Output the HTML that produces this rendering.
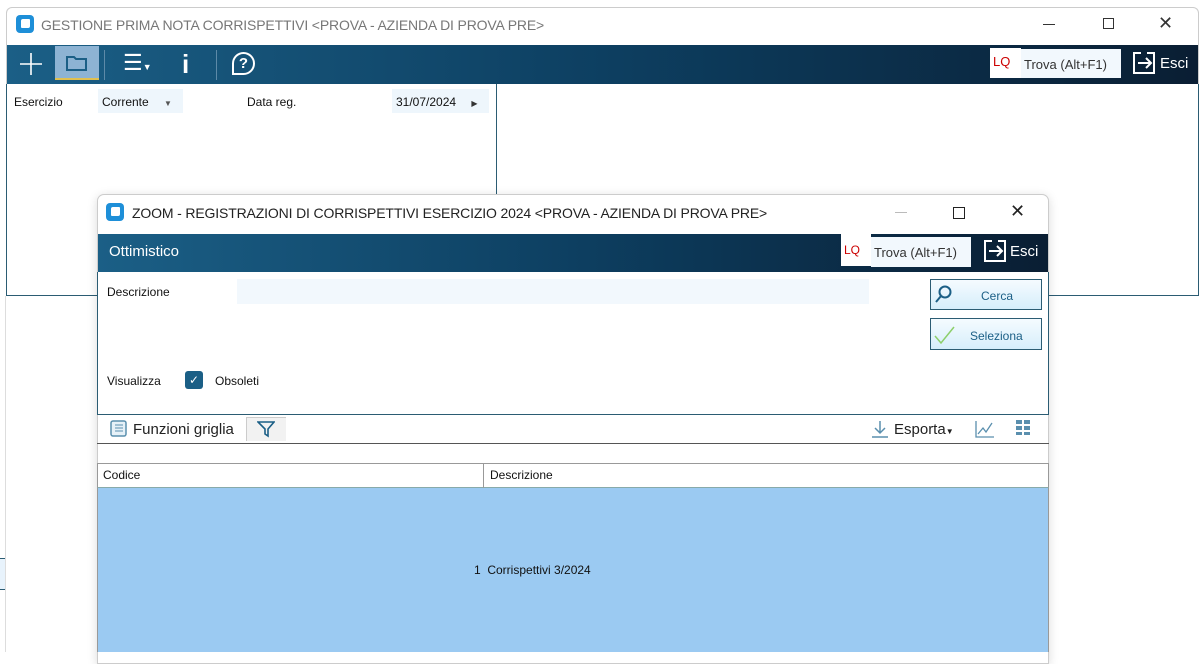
<!DOCTYPE html><html><head><style>
*{box-sizing:border-box;margin:0;padding:0}
body{width:1203px;height:652px;background:#fff;position:relative;overflow:hidden;font-family:"Liberation Sans",sans-serif;font-size:12px;color:#111}
.a{position:absolute}
.grad{background:linear-gradient(90deg,#1b5f86 0%,#0d3f61 50%,#0a1e33 100%)}
</style></head><body>
<div class="a" style="left:6px;top:7px;width:1193px;height:289px;border:1px solid #ccc;border-bottom:none;border-radius:6px 6px 0 0"></div>
<div class="a" style="left:16px;top:15px;width:18px;height:18px;background:#1e8fd8;border-radius:4px"><div class="a" style="left:5px;top:4px;width:9px;height:9px;background:#fff;border-radius:2px 1px 2px 1px"></div></div>
<div class="a" style="left:41px;top:17px;font-size:14px;color:#777;letter-spacing:-0.15px">GESTIONE PRIMA NOTA CORRISPETTIVI &lt;PROVA - AZIENDA DI PROVA PRE&gt;</div>
<div class="a" style="left:1043px;top:24px;width:12px;border-top:1px solid #333"></div>
<div class="a" style="left:1103px;top:18px;width:11px;height:11px;border:1px solid #333"></div>
<div class="a" style="left:1158px;top:13px;font-size:18px;color:#333">✕</div>
<div class="a grad" style="left:7px;top:45px;width:1191px;height:39px"></div>
<svg class="a" style="left:19px;top:52px" width="24" height="24"><path d="M12 1v22M1 12h22" stroke="#fff" stroke-width="1.6"/></svg>
<div class="a" style="left:55px;top:46px;width:44px;height:34px;background:#8db3d3;border-bottom:2px solid #e0c050"></div>
<svg class="a" style="left:65px;top:54px" width="24" height="18"><path d="M2 3h7l2 2h10v11H2z" fill="none" stroke="#1b5f86" stroke-width="2"/></svg>
<div class="a" style="left:104px;top:50px;width:1px;height:30px;background:#5d8aa8"></div>
<div class="a" style="left:123px;top:50px;color:#fff;font-size:22px">☰<span style="font-size:9px">▼</span></div>
<div class="a" style="left:182px;top:49px;color:#fff;font-size:26px;font-weight:bold">i</div>
<div class="a" style="left:216px;top:50px;width:1px;height:30px;background:#5d8aa8"></div>
<div class="a" style="left:232px;top:52px;width:23px;height:23px;border:2px solid #fff;border-radius:50% 50% 50% 0;color:#fff;font-size:15px;text-align:center;line-height:19px;font-weight:bold">?</div>
<div class="a" style="left:990px;top:48px;width:31px;height:30px;background:#fff;color:#c00;font-size:13px;padding:6px 3px">LQ</div>
<div class="a" style="left:1021px;top:49px;width:100px;height:29px;background:#f2f8fd;font-size:13px;padding:8px 3px;color:#333">Trova (Alt+F1)</div>
<svg class="a" style="left:1132px;top:51px" width="24" height="24"><path d="M9 2H2v20h20V2h-7M6 12h13M14 7l5 5-5 5" fill="none" stroke="#fff" stroke-width="2"/></svg>
<div class="a" style="left:1160px;top:55px;color:#fff;font-size:15px">Esci</div>
<div class="a" style="left:6px;top:84px;width:1193px;height:212px;border:1px solid #2b5c73;border-top:none"></div>
<div class="a" style="left:496px;top:84px;width:1px;height:212px;background:#2b5c73"></div>
<div class="a" style="left:14px;top:95px">Esercizio</div>
<div class="a" style="left:98px;top:89px;width:85px;height:24px;background:#eef6fc;padding:6px 4px">Corrente <span style="font-size:8px;margin-left:12px;color:#555">▼</span></div>
<div class="a" style="left:247px;top:95px">Data reg.</div>
<div class="a" style="left:392px;top:89px;width:97px;height:24px;background:#eef6fc;padding:6px 4px">31/07/2024 <span style="font-size:8px;margin-left:12px;color:#333">▶</span></div>
<div class="a" style="left:0;top:558px;width:6px;height:32px;background:#e8f3fc;border-top:1px solid #2b5c73;border-bottom:1px solid #2b5c73"></div>
<div class="a" style="left:5px;top:296px;width:1px;height:356px;background:#ddd"></div>
<!-- dialog -->
<div class="a" style="left:97px;top:194px;width:952px;height:470px;background:#fff;border:1px solid #ccc;border-radius:7px 7px 0 0;box-shadow:0 2px 10px rgba(0,0,0,.15)"></div>
<div class="a" style="left:106px;top:203px;width:18px;height:18px;background:#1e8fd8;border-radius:4px"><div class="a" style="left:5px;top:4px;width:9px;height:9px;background:#fff;border-radius:2px 1px 2px 1px"></div></div>
<div class="a" style="left:132px;top:205px;font-size:14px;color:#222;letter-spacing:-0.15px">ZOOM - REGISTRAZIONI DI CORRISPETTIVI ESERCIZIO 2024 &lt;PROVA - AZIENDA DI PROVA PRE&gt;</div>
<div class="a" style="left:895px;top:212px;width:12px;border-top:1px solid #bbb"></div>
<div class="a" style="left:953px;top:207px;width:12px;height:12px;border:1.5px solid #222"></div>
<div class="a" style="left:1010px;top:201px;font-size:18px;color:#222">✕</div>
<div class="a grad" style="left:98px;top:234px;width:950px;height:38px"></div>
<div class="a" style="left:109px;top:243px;color:#fff;font-size:15px">Ottimistico</div>
<div class="a" style="left:841px;top:234px;width:30px;height:32px;background:#fff;color:#c00;font-size:12px;padding:9px 3px">LQ</div>
<div class="a" style="left:871px;top:237px;width:100px;height:30px;background:#f2f8fd;font-size:13px;padding:8px 3px;color:#333">Trova (Alt+F1)</div>
<svg class="a" style="left:983px;top:239px" width="24" height="24"><path d="M9 2H2v20h20V2h-7M6 12h13M14 7l5 5-5 5" fill="none" stroke="#fff" stroke-width="2"/></svg>
<div class="a" style="left:1010px;top:243px;color:#fff;font-size:15px">Esci</div>
<div class="a" style="left:97px;top:272px;width:952px;height:143px;border:1px solid #2b5c73;border-top:none"></div>
<div class="a" style="left:107px;top:285px">Descrizione</div>
<div class="a" style="left:237px;top:279px;width:632px;height:25px;background:#f2f8fd"></div>
<div class="a" style="left:930px;top:279px;width:112px;height:31px;border:1px solid #2b5c73;background:linear-gradient(#f5fbff,#d6eefb);color:#1b5f86;font-size:12px;padding:9px 0 0 50px">Cerca</div>
<svg class="a" style="left:934px;top:284px" width="20" height="20"><circle cx="11" cy="8" r="5.5" fill="none" stroke="#1b5f86" stroke-width="2"/><path d="M7 12l-5 6" stroke="#1b5f86" stroke-width="2"/></svg>
<div class="a" style="left:930px;top:318px;width:112px;height:32px;border:1px solid #2b5c73;background:linear-gradient(#f5fbff,#d6eefb);color:#1b5f86;font-size:12px;padding:10px 0 0 39px">Seleziona</div>
<svg class="a" style="left:933px;top:324px" width="24" height="22"><path d="M2 12l6 7L21 3" fill="none" stroke="#8ccf6a" stroke-width="1.5"/></svg>
<div class="a" style="left:107px;top:374px">Visualizza</div>
<div class="a" style="left:185px;top:371px;width:18px;height:18px;background:#1b5f86;border-radius:3px;color:#fff;font-size:12px;text-align:center;line-height:18px">✓</div>
<div class="a" style="left:215px;top:374px">Obsoleti</div>
<svg class="a" style="left:110px;top:420px" width="18" height="18"><rect x="1" y="1" width="15" height="15" rx="2" fill="#e6f1f8" stroke="#5a8fae" stroke-width="1.5"/><path d="M5 5h8M5 8h8M5 11h8" stroke="#5a8fae"/></svg>
<div class="a" style="left:133px;top:421px;font-size:15px;color:#222">Funzioni griglia</div>
<div class="a" style="left:246px;top:417px;width:40px;height:24px;background:#f2f2f2;border-left:1px solid #ccc;border-top:1px solid #ccc"></div>
<svg class="a" style="left:257px;top:420px" width="18" height="18"><path d="M1 2h16l-6 7v7l-3-2V9z" fill="none" stroke="#1b5f86" stroke-width="1.6"/></svg>
<div class="a" style="left:97px;top:443px;width:952px;height:1px;background:#555"></div>
<svg class="a" style="left:871px;top:420px" width="18" height="18"><path d="M9 1v12M4 8l5 5 5-5M1 17h16" fill="none" stroke="#5a8fae" stroke-width="1.5"/></svg>
<div class="a" style="left:894px;top:421px;font-size:15px;color:#222">Esporta<span style="font-size:8px">▼</span></div>
<svg class="a" style="left:975px;top:420px" width="20" height="18"><path d="M1 1v16h18M3 14l5-6 3 4 6-9" fill="none" stroke="#5a8fae" stroke-width="1.3"/></svg>
<svg class="a" style="left:1016px;top:420px" width="16" height="16" fill="#5a8fae"><rect x="0" y="0" width="6" height="4"/><rect x="8" y="0" width="6" height="4"/><rect x="0" y="6" width="6" height="4"/><rect x="8" y="6" width="6" height="4"/><rect x="0" y="12" width="6" height="3"/><rect x="8" y="12" width="6" height="3"/></svg>
<div class="a" style="left:97px;top:463px;width:952px;height:25px;border:1px solid #999;border-bottom:1px solid #8aa;background:#fff"></div>
<div class="a" style="left:483px;top:463px;width:1px;height:25px;background:#999"></div>
<div class="a" style="left:103px;top:468px">Codice</div>
<div class="a" style="left:490px;top:468px">Descrizione</div>
<div class="a" style="left:97px;top:488px;width:952px;height:164px;background:#9bcaf2;border-left:1px solid #999;border-right:1px solid #999"></div>
<div class="a" style="left:474px;top:563px">1&nbsp; Corrispettivi 3/2024</div>
</body></html>
